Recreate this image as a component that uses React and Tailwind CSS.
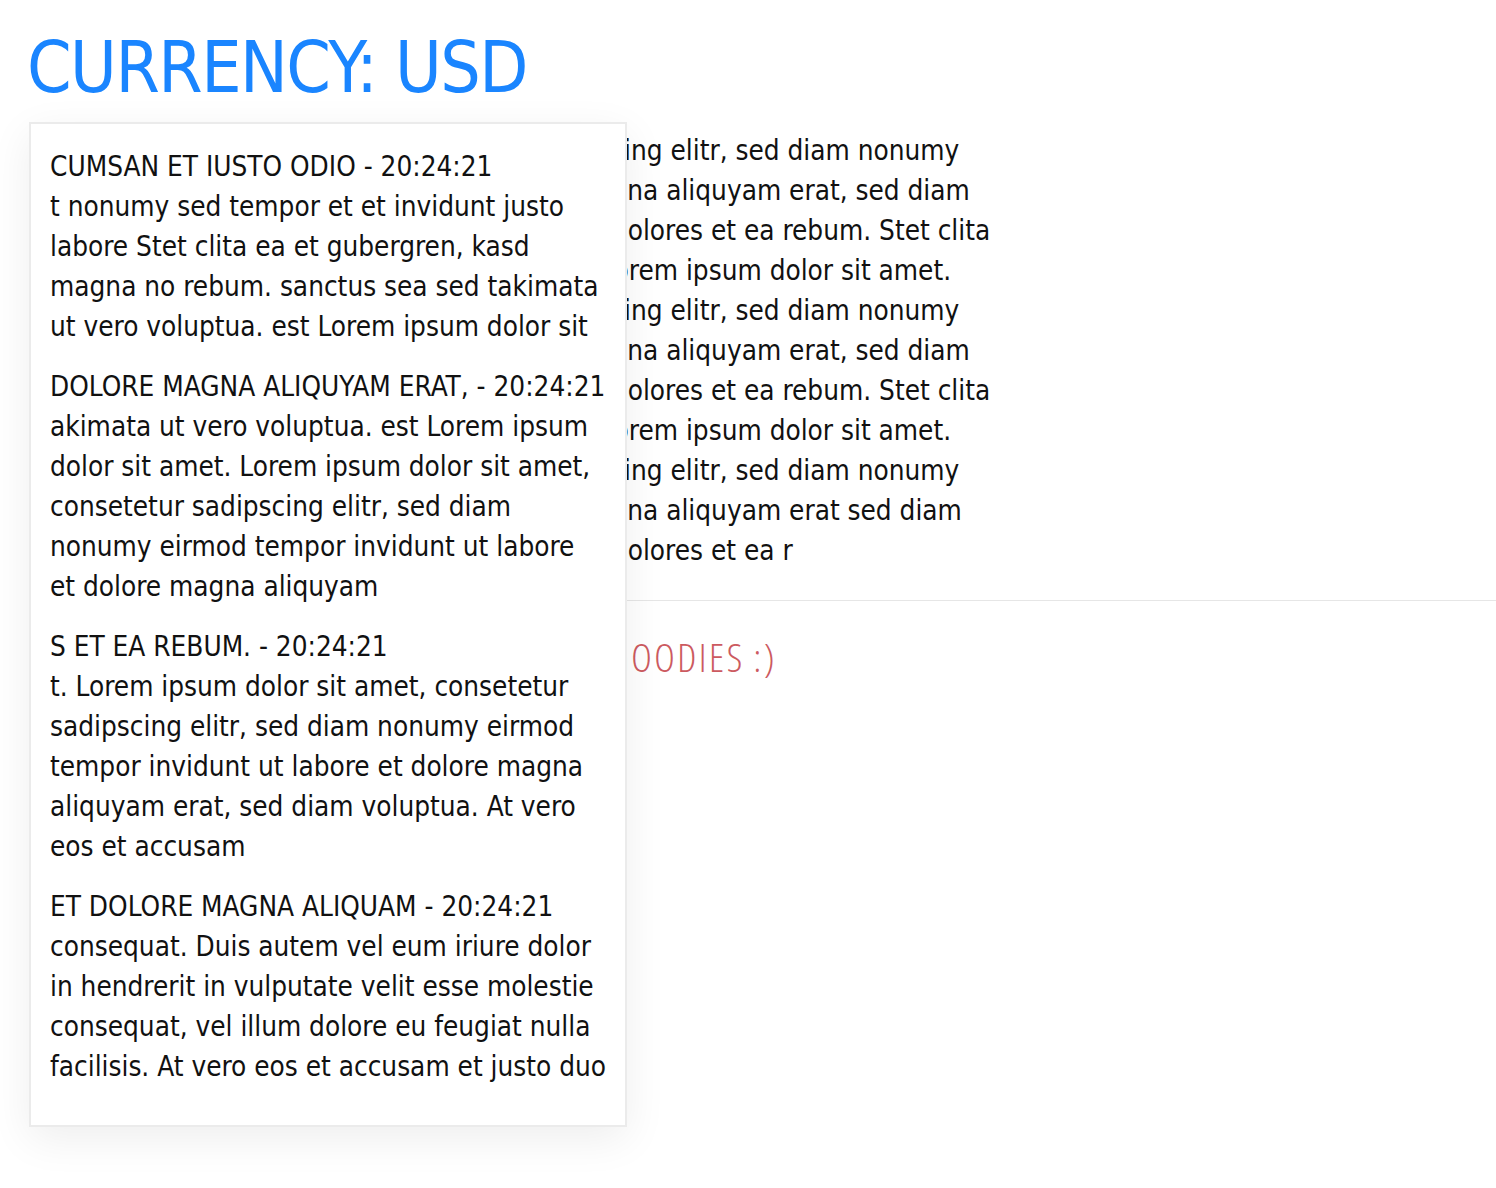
import React from 'react';

const backgroundLines = [
  'Lorem ipsum dolor sit amet, consetetur sadipscing elitr, sed diam nonumy',
  'eirmod tempor invidunt ut labore et dolore magna aliquyam erat, sed diam',
  'voluptua. At vero eos et accusam et justo duo dolores et ea rebum. Stet clita',
  'kasd gubergren, no sea takimata sanctus est Lorem ipsum dolor sit amet.',
  'Lorem ipsum dolor sit amet, consetetur sadipscing elitr, sed diam nonumy',
  'eirmod tempor invidunt ut labore et dolore magna aliquyam erat, sed diam',
  'voluptua. At vero eos et accusam et justo duo dolores et ea rebum. Stet clita',
  'kasd gubergren, no sea takimata sanctus est Lorem ipsum dolor sit amet.',
  'Lorem ipsum dolor sit amet, consetetur sadipscing elitr, sed diam nonumy',
  'eirmod tempor invidunt ut labore et dolore magna aliquyam erat sed diam',
  'voluptua. At vero eos et accusam et justo duo dolores et ea r',
];

const messages = [
  {
    title: 'CUMSAN ET IUSTO ODIO - 20:24:21',
    lines: [
      't nonumy sed tempor et et invidunt justo',
      'labore Stet clita ea et gubergren, kasd',
      'magna no rebum. sanctus sea sed takimata',
      'ut vero voluptua. est Lorem ipsum dolor sit',
    ],
  },
  {
    title: 'DOLORE MAGNA ALIQUYAM ERAT, - 20:24:21',
    lines: [
      'akimata ut vero voluptua. est Lorem ipsum',
      'dolor sit amet. Lorem ipsum dolor sit amet,',
      'consetetur sadipscing elitr, sed diam',
      'nonumy eirmod tempor invidunt ut labore',
      'et dolore magna aliquyam',
    ],
  },
  {
    title: 'S ET EA REBUM. - 20:24:21',
    lines: [
      't. Lorem ipsum dolor sit amet, consetetur',
      'sadipscing elitr, sed diam nonumy eirmod',
      'tempor invidunt ut labore et dolore magna',
      'aliquyam erat, sed diam voluptua. At vero',
      'eos et accusam',
    ],
  },
  {
    title: 'ET DOLORE MAGNA ALIQUAM - 20:24:21',
    lines: [
      'consequat. Duis autem vel eum iriure dolor',
      'in hendrerit in vulputate velit esse molestie',
      'consequat, vel illum dolore eu feugiat nulla',
      'facilisis. At vero eos et accusam et justo duo',
    ],
  },
];

export default function App() {
  return (
    <div className="min-h-[1188px] bg-white pl-[30px] pt-[32px] font-['DejaVu_Sans_Condensed',sans-serif] font-stretch-condensed text-[#111]">
      <h1 className="-ml-[3px] whitespace-nowrap text-[71px] leading-[71px] tracking-[-1.5px] text-[#1a85ff]">
        CURRENCY: USD
      </h1>

      <div className="relative mt-[28px]">
        {/* page text behind the popover */}
        <div className="text-[27.7px] leading-[40px]">
          {backgroundLines.map((line, i) => (
            <div key={i} className="whitespace-nowrap">{line}</div>
          ))}
        </div>

        {/* message popover */}
        <div className="absolute -left-px top-[-9px] z-10 w-[598px] border-2 border-[#ebebeb] bg-white pl-[19px] pr-[16px] pb-[38px] pt-[23px] shadow-[0_12px_40px_rgba(0,0,0,0.07)]">
          <div className="space-y-5 text-[27.7px] leading-[40px]">
            {messages.map((msg, i) => (
              <div key={i}>
                <div className="whitespace-nowrap">{msg.title}</div>
                {msg.lines.map((line, j) => (
                  <div key={j} className="whitespace-nowrap">{line}</div>
                ))}
              </div>
            ))}
          </div>
        </div>
      </div>

      <hr className="mt-[29px] border-t border-[#e6e6e6]" />

      <h2 className="mt-[36px] whitespace-nowrap font-['Open_Sans',sans-serif] font-stretch-condensed text-[39px] font-light leading-[39px] tracking-[2.5px] [word-spacing:-1px] text-[#cc5a60]">
        THANKS FOR YOUR ORDER ENJOY YOUR GOODIES :)
      </h2>
    </div>
  );
}
